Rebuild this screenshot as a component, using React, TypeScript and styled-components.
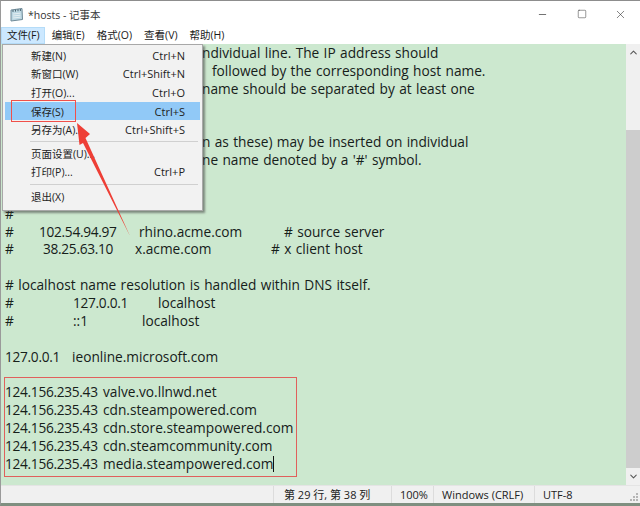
import styled, { createGlobalStyle } from 'styled-components'
import { ChevronDown, ChevronUp, Minus, Square, X } from 'lucide-react'

const GlobalStyle = createGlobalStyle`
  html, body {
    margin: 0;
    padding: 0;
    background: #fff;
  }
  body {
    width: 640px;
    height: 506px;
    overflow: hidden;
  }
`

const uiFont = `"Open Sans", "Noto Sans CJK SC", sans-serif`

const Window = styled.div`
  position: relative;
  width: 640px;
  height: 506px;
  display: flex;
  flex-direction: column;
  box-sizing: border-box;
  border-top: 1px solid #8d8d8d;
  border-left: 1px solid #9a9a9a;
  border-bottom: 3px solid #7f8f80;
  background: #fff;
  font-family: ${uiFont};
  color: #1a1a1a;
  overflow: hidden;
`

const TitleBar = styled.div`
  height: 26px;
  flex: none;
  display: flex;
  align-items: center;
  padding-left: 8px;
  font-size: 10.5px;
`

const TitleText = styled.span`
  margin-left: 4px;
  color: #333;
`

const WindowControls = styled.div`
  margin-left: auto;
  display: flex;
  align-items: center;
  color: #333;
`

const ControlButton = styled.div`
  width: 39px;
  height: 26px;
  display: flex;
  align-items: center;
  justify-content: center;
`

const MenuBar = styled.div`
  height: 17px;
  flex: none;
  display: flex;
  font-size: 10.5px;
  line-height: 17px;
`

const MenuTitle = styled.div<{ $active?: boolean }>`
  padding: 0 5px 0 6px;
  margin-right: 1px;
  background: ${props => (props.$active ? '#cce8ff' : 'transparent')};
  box-shadow: ${props => (props.$active ? 'inset 0 0 0 1px #b5dcf8' : 'none')};
`

const Body = styled.div`
  flex: 1;
  min-height: 0;
  display: flex;
`

const Editor = styled.div`
  flex: 1;
  min-width: 0;
  background: #cce8cf;
  padding-left: 4px;
  font-size: 13.7px;
  word-spacing: 0.8px;
  line-height: 17.86px;
  color: #16201a;
  overflow: hidden;
`

const Line = styled.div<{ $indent?: number }>`
  height: 17.86px;
  white-space: pre;
  display: flex;
  padding-left: ${props => props.$indent ?? 0}px;
`

const Cell = styled.span<{ $width: number; $tight?: boolean }>`
  display: inline-block;
  flex: none;
  width: ${props => props.$width}px;
  white-space: pre;
  letter-spacing: ${props => (props.$tight ? '-0.3px' : '0')};
`

const HighlightBox = styled.div`
  width: 293px;
  box-sizing: border-box;
  height: 100px;
  margin-top: 12px;
  margin-left: -1px;
  padding-top: 5px;
  border: 1px solid #e0605c;
`

const Caret = styled.span`
  display: inline-block;
  width: 1px;
  height: 16px;
  background: #111;
  align-self: center;
`

const ScrollBar = styled.div`
  width: 14px;
  flex: none;
  display: flex;
  flex-direction: column;
  align-items: center;
  background: #f0f0f0;
  color: #555;
`

const ScrollArrow = styled.div`
  height: 17px;
  flex: none;
  display: flex;
  align-items: center;
  justify-content: center;
`

const ScrollTrack = styled.div`
  flex: 1;
  width: 100%;
  display: flex;
  flex-direction: column;
  padding-top: 69px;
  box-sizing: border-box;
`

const ScrollThumb = styled.div`
  flex: 1;
  background: #cdcdcd;
`

const StatusBar = styled.div`
  height: 18px;
  flex: none;
  display: flex;
  background: #f0f0f0;
  border-top: 1px solid #e4e4e4;
  font-size: 11px;
  line-height: 18px;
  color: #222;
  box-sizing: border-box;
`

const StatusCell = styled.div<{ $width: number; $pad?: number }>`
  width: ${props => props.$width}px;
  flex: none;
  box-sizing: border-box;
  padding-left: ${props => props.$pad ?? 8}px;
  border-left: 1px solid #dcdcdc;
  white-space: nowrap;
`

const StatusSpacer = styled.div`
  flex: 1;
`

const Grip = styled.svg`
  position: absolute;
  right: 1px;
  bottom: 1px;
`

const Menu = styled.div`
  position: absolute;
  left: 1px;
  top: 43px;
  width: 201px;
  height: 167px;
  box-sizing: border-box;
  padding: 1px 2px;
  background: #f2f2f2;
  border: 1px solid #a8a8a8;
  box-shadow: 2px 2px 2px rgba(60, 60, 60, 0.55);
  font-size: 11px;
`

const MenuItem = styled.div<{ $selected?: boolean }>`
  position: relative;
  height: 18.6px;
  display: flex;
  align-items: center;
  justify-content: space-between;
  padding: 0 15px 0 26px;
  background: ${props => (props.$selected ? '#91c9f7' : 'transparent')};
  color: #222;
  white-space: nowrap;
`

const MenuLabel = styled.span`
  font-size: 10.5px;
`

const MenuSeparator = styled.div<{ $gap: number }>`
  height: 1px;
  margin: ${props => props.$gap}px 2px;
  margin-left: 25px;
  background: #d0d0d0;
`

const SaveOutline = styled.div`
  position: absolute;
  left: 6px;
  top: -2px;
  width: 65px;
  height: 22px;
  box-sizing: border-box;
  border: 1px solid #f0504a;
`

const Arrow = styled.svg`
  position: absolute;
  left: 0;
  top: 0;
  pointer-events: none;
`

const NotepadIcon = () => (
  <svg width="15" height="15" viewBox="0 0 15 15">
    <path d="M2 3 L13 1.5 L13.5 12.5 L2 14 Z" fill="#bcd7e2" stroke="#6f8a98" strokeWidth="1" />
    <path d="M4 3 L4 5 M6.5 2.6 L6.5 4.6 M9 2.2 L9 4.2 M11.4 2 L11.4 4" stroke="#4c6470" strokeWidth="1" />
    <path d="M4 7 L11.5 6.2 M4 9 L11.5 8.2 M4 11 L11.5 10.2" stroke="#e4eef2" strokeWidth="1" />
  </svg>
)

const menuItems = [
  { label: '新建(N)', shortcut: 'Ctrl+N' },
  { label: '新窗口(W)', shortcut: 'Ctrl+Shift+N' },
  { label: '打开(O)...', shortcut: 'Ctrl+O' },
  { label: '保存(S)', shortcut: 'Ctrl+S', selected: true },
  { label: '另存为(A)...', shortcut: 'Ctrl+Shift+S' },
]

const hostLines = [
  'valve.vo.llnwd.net',
  'cdn.steampowered.com',
  'cdn.store.steampowered.com',
  'cdn.steamcommunity.com',
]

export default function App() {
  return (
    <>
      <GlobalStyle />
      <Window>
        <TitleBar>
          <NotepadIcon />
          <TitleText>*hosts - 记事本</TitleText>
          <WindowControls>
            <ControlButton><Minus size={11} strokeWidth={1.5} /></ControlButton>
            <ControlButton><Square size={10} strokeWidth={1.2} /></ControlButton>
            <ControlButton><X size={13} strokeWidth={1.1} /></ControlButton>
          </WindowControls>
        </TitleBar>
        <MenuBar>
          <MenuTitle $active>文件(F)</MenuTitle>
          <MenuTitle>编辑(E)</MenuTitle>
          <MenuTitle>格式(O)</MenuTitle>
          <MenuTitle>查看(V)</MenuTitle>
          <MenuTitle>帮助(H)</MenuTitle>
        </MenuBar>
        <Body>
          <Editor>
            <Line $indent={197}>ndividual line. The IP address should</Line>
            <Line $indent={207}>followed by the corresponding host name.</Line>
            <Line $indent={197}>name should be separated by at least one</Line>
            <Line />
            <Line />
            <Line $indent={197}>n as these) may be inserted on individual</Line>
            <Line $indent={197}>ne name denoted by a '#' symbol.</Line>
            <Line />
            <Line />
            <Line>#</Line>
            <Line>
              <Cell $width={34}>#</Cell>
              <Cell $width={100} $tight>102.54.94.97</Cell>
              <Cell $width={145}>rhino.acme.com</Cell>
              <span># source server</span>
            </Line>
            <Line>
              <Cell $width={38}>#</Cell>
              <Cell $width={92} $tight>38.25.63.10</Cell>
              <Cell $width={136}>x.acme.com</Cell>
              <span># x client host</span>
            </Line>
            <Line />
            <Line># localhost name resolution is handled within DNS itself.</Line>
            <Line>
              <Cell $width={68}>#</Cell>
              <Cell $width={85} $tight>127.0.0.1</Cell>
              <span>localhost</span>
            </Line>
            <Line>
              <Cell $width={68}>#</Cell>
              <Cell $width={69}>::1</Cell>
              <span>localhost</span>
            </Line>
            <Line />
            <Line>
              <Cell $width={67} $tight>127.0.0.1</Cell>
              <span>ieonline.microsoft.com</span>
            </Line>
            <HighlightBox>
              {hostLines.map(host => (
                <Line key={host}>
                  <Cell $width={98} $tight>124.156.235.43</Cell>
                  <span>{host}</span>
                </Line>
              ))}
              <Line>
                <Cell $width={98} $tight>124.156.235.43</Cell>
                <span>media.steampowered.com</span>
                <Caret />
              </Line>
            </HighlightBox>
          </Editor>
          <ScrollBar>
            <ScrollArrow><ChevronUp size={11} strokeWidth={2.2} /></ScrollArrow>
            <ScrollTrack><ScrollThumb /></ScrollTrack>
            <ScrollArrow><ChevronDown size={11} strokeWidth={2.2} /></ScrollArrow>
          </ScrollBar>
        </Body>
        <StatusBar>
          <StatusSpacer />
          <StatusCell $width={118} $pad={10}>第 29 行, 第 38 列</StatusCell>
          <StatusCell $width={42}>100%</StatusCell>
          <StatusCell $width={101}>Windows (CRLF)</StatusCell>
          <StatusCell $width={106}>UTF-8</StatusCell>
        </StatusBar>
        <Grip width="10" height="10" viewBox="0 0 10 10">
          <path d="M7 1h2v2H7zM4 4h2v2H4zM7 4h2v2H7zM1 7h2v2H1zM4 7h2v2H4zM7 7h2v2H7z" fill="#b5b5b5" />
        </Grip>
        <Menu>
          {menuItems.map(item => (
            <MenuItem key={item.label} $selected={item.selected}>
              <MenuLabel>{item.label}</MenuLabel>
              <span>{item.shortcut}</span>
              {item.selected && <SaveOutline />}
            </MenuItem>
          ))}
          <MenuSeparator $gap={2} />
          <MenuItem><MenuLabel>页面设置(U)...</MenuLabel></MenuItem>
          <MenuItem>
            <MenuLabel>打印(P)...</MenuLabel>
            <span>Ctrl+P</span>
          </MenuItem>
          <MenuSeparator $gap={2.5} />
          <MenuItem><MenuLabel>退出(X)</MenuLabel></MenuItem>
        </Menu>
        <Arrow width="640" height="506" viewBox="0 0 640 506">
          <path d="M76 122 L89 133 L84.5 137 L129 235 L82 142 L78.5 144 Z" fill="#ee3f36" />
        </Arrow>
      </Window>
    </>
  )
}
